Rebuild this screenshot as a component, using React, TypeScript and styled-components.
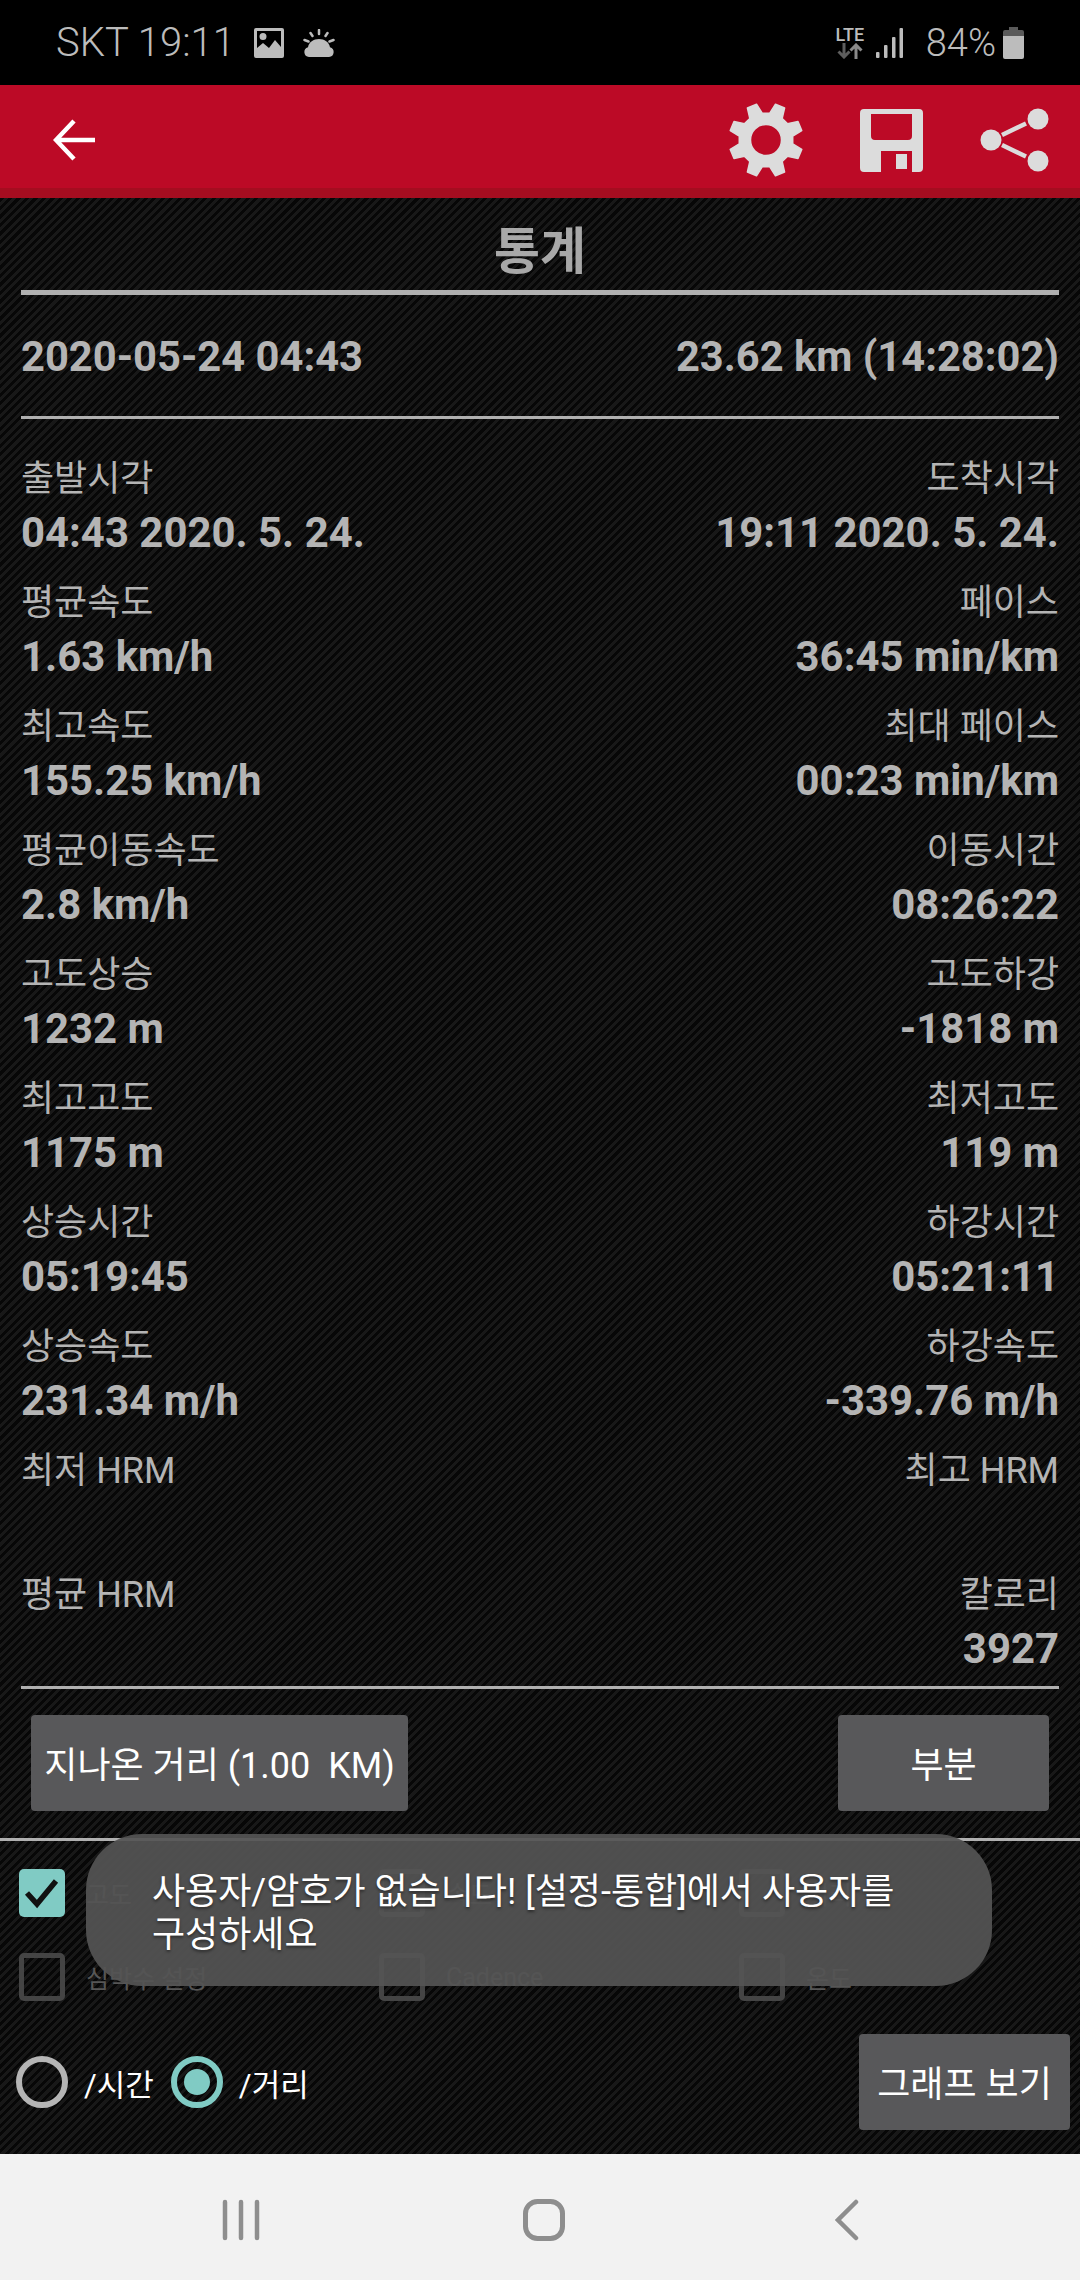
import React from "react";
import styled, { createGlobalStyle } from "styled-components";

const GlobalStyle = createGlobalStyle`
  html, body {
    margin: 0;
    padding: 0;
    background: #000;
  }
  * {
    box-sizing: border-box;
  }
`;

const FONT = `Roboto, "Noto Sans CJK KR", sans-serif`;

const Screen = styled.div`
  position: relative;
  display: flex;
  flex-direction: column;
  width: 1080px;
  height: 2280px;
  overflow: hidden;
  font-family: ${FONT};
  color: #b4b4b4;
`;

const StatusBar = styled.div`
  display: flex;
  flex-shrink: 0;
  align-items: center;
  height: 85px;
  padding: 0 56px 0 56px;
  background: #000;
  color: #bcbcbc;
`;

const StatusText = styled.span`
  font-size: 38px;
  line-height: 44px;
  font-weight: 300;
  white-space: pre;
`;

const Carrier = styled(StatusText)`
  font-size: 40px;
`;

const StatusLeft = styled.div`
  display: flex;
  align-items: center;
  gap: 19px;
  flex: 1;
`;

const StatusRight = styled.div`
  display: flex;
  align-items: center;
`;

const LteBox = styled.div`
  display: flex;
  flex-direction: column;
  align-items: center;
  width: 30px;
  margin-right: 11px;
  font-size: 18px;
  line-height: 17px;
  font-weight: 500;
`;

const Percent = styled(StatusText)`
  margin: 0 7px 0 23px;
`;

const TopBar = styled.div`
  display: flex;
  flex-shrink: 0;
  align-items: center;
  height: 113px;
  padding: 7px 31px 0 53px;
  background: #bc0a26;
  border-bottom: 10px solid #a50d20;
`;

const BackButton = styled.div`
  display: flex;
  flex: 1;
`;

const Actions = styled.div`
  display: flex;
  align-items: center;
  gap: 57px;
`;

const Main = styled.div`
  flex: 1;
  display: flex;
  flex-direction: column;
  background-color: #090909;
  background-image: repeating-linear-gradient(
    135deg,
    #070707 0,
    #070707 3px,
    #181818 3px,
    #181818 6px
  );
`;

const Summary = styled.div`
  padding: 0 21px 0 21px;
`;

const Title = styled.h1`
  margin: 0;
  height: 92px;
  font-size: 50px;
  line-height: 108px;
  font-weight: 700;
  text-align: center;
  color: #a8a8a8;
`;

const Rule = styled.div<{ $h: number }>`
  flex-shrink: 0;
  height: ${(p) => p.$h}px;
  background: #b0b0b0;
`;

const DateRow = styled.div`
  display: flex;
  justify-content: space-between;
  align-items: center;
  height: 121px;
  padding: 2px 0 0 0;
  font-size: 41.7px;
  font-weight: 700;
`;

const StatGrid = styled.div`
  display: flex;
  flex-direction: column;
  padding: 34px 0 0;
`;

const StatRow = styled.div`
  display: flex;
  justify-content: space-between;
  height: 124px;
  &:last-child {
    height: 117px;
  }
`;

const StatCell = styled.div<{ $right?: boolean }>`
  display: flex;
  flex-direction: column;
  text-align: ${(p) => (p.$right ? "right" : "left")};
`;

const StatLabel = styled.div`
  height: 54px;
  font-size: 36px;
  line-height: 52px;
`;

const StatValue = styled.div`
  height: 56px;
  font-size: 41.9px;
  line-height: 52px;
  font-weight: 700;
`;

const ButtonRow = styled.div`
  display: flex;
  justify-content: space-between;
  padding: 26px 31px 27px 31px;
`;

const GreyButton = styled.div<{ $w: number }>`
  display: flex;
  align-items: center;
  justify-content: center;
  width: ${(p) => p.$w}px;
  height: 96px;
  padding-bottom: 2px;
  border-radius: 4px;
  background: #58585a;
  color: #fff;
  font-size: 36px;
  font-weight: 400;
  white-space: pre;
`;

const Options = styled.div`
  display: grid;
  grid-template-columns: repeat(3, 360px);
  row-gap: 36px;
  padding: 28px 0 33px 19px;
`;

const Option = styled.div`
  display: flex;
  align-items: center;
  gap: 21px;
  height: 48px;
  color: #565656;
  font-size: 25px;
`;

const CheckBox = styled.div<{ $on?: boolean }>`
  display: flex;
  align-items: center;
  justify-content: center;
  width: 46px;
  height: 48px;
  border-radius: 5px;
  background: ${(p) => (p.$on ? "#80cbc4" : "transparent")};
  border: ${(p) => (p.$on ? "none" : "5px solid #444")};
`;

const BottomRow = styled.div`
  display: flex;
  justify-content: space-between;
  align-items: center;
  padding: 0 10px 24px 16px;
`;

const RadioGroup = styled.div`
  display: flex;
  align-items: center;
`;

const RadioLabel = styled.span`
  margin: 0 17px 0 16px;
  color: #fff;
  font-size: 31px;
`;

const Radio = styled.div<{ $on?: boolean }>`
  display: flex;
  align-items: center;
  justify-content: center;
  width: 52px;
  height: 52px;
  border-radius: 50%;
  border: 6px solid ${(p) => (p.$on ? "#80cbc4" : "#b5b5b5")};
`;

const RadioDot = styled.div`
  width: 26px;
  height: 26px;
  border-radius: 50%;
  background: #80cbc4;
`;

const Toast = styled.div`
  position: absolute;
  left: 86px;
  top: 1834px;
  width: 906px;
  height: 152px;
  padding: 37px 60px 0 66px;
  border-radius: 56px;
  background: rgba(84, 84, 84, 0.93);
  color: #fff;
  font-size: 36px;
  line-height: 43px;
  text-shadow: 0 2px 3px rgba(0, 0, 0, 0.45);
`;

const NavBar = styled.div`
  display: grid;
  flex-shrink: 0;
  grid-template-columns: repeat(3, 303px);
  height: 126px;
  padding: 0 0 0 89px;
  background: #f2f2f2;
`;

const NavSlot = styled.div`
  display: flex;
  align-items: center;
  justify-content: center;
  padding-top: 6px;
`;

// 8 tooth gear, computed instead of hand typing every point
function gearPath(cx: number, cy: number, outer: number, root: number, hole: number) {
  const pts: string[] = [];
  const teeth = 8;
  for (let i = 0; i < teeth; i++) {
    const a = (i * Math.PI * 2) / teeth - Math.PI / 2 + Math.PI / 8;
    const step = (Math.PI * 2) / teeth;
    const at = (r: number, t: number) =>
      `${(cx + r * Math.cos(t)).toFixed(2)} ${(cy + r * Math.sin(t)).toFixed(2)}`;
    pts.push(at(root, a - step * 0.32));
    pts.push(at(outer, a - step * 0.17));
    pts.push(at(outer, a + step * 0.17));
    pts.push(at(root, a + step * 0.32));
  }
  const h = `M${cx - hole} ${cy}a${hole} ${hole} 0 1 0 ${hole * 2} 0a${hole} ${hole} 0 1 0 ${-hole * 2} 0Z`;
  return `M${pts.join("L")}Z${h}`;
}

function PictureIcon() {
  return (
    <svg width="30" height="30" viewBox="0 0 30 30" fill="#bcbcbc">
      <path
        fillRule="evenodd"
        d="M2 0h26a2 2 0 0 1 2 2v26a2 2 0 0 1-2 2H2a2 2 0 0 1-2-2V2a2 2 0 0 1 2-2ZM3 3v17l6-5 6 5 6-8 6 7V3ZM9 5a3.500 3.500 0 1 0 0 7 3.500 3.500 0 0 0 0-7Z"
      />
    </svg>
  );
}

function WeatherIcon() {
  return (
    <svg width="32" height="28" viewBox="0 0 32 28" fill="#bcbcbc">
      <path d="M6 28a5 5 0 0 1-1-9.800C6 13 10.500 10 16 10s10 3 11 8.200A5 5 0 0 1 26 28Z" />
      <g stroke="#bcbcbc" strokeWidth="2.500" strokeLinecap="round">
        <path d="M16 1v4M7.500 4l2 3M24.500 4l-2 3M1.500 11l4 1.500M30.500 11l-4 1.500" />
      </g>
    </svg>
  );
}

function DataArrows() {
  return (
    <svg width="26" height="16" viewBox="0 0 26 16" fill="none" strokeWidth="3">
      <path d="M7 0v14M1.500 8.500 7 14l5.500-5.500" stroke="#5e5e5e" />
      <path d="M19 16V2M13.500 7.500 19 2l5.500 5.500" stroke="#8a8a8a" />
    </svg>
  );
}

function SignalIcon() {
  return (
    <svg width="27" height="30" viewBox="0 0 27 30" fill="#bcbcbc">
      <rect x="0" y="24" width="3.500" height="6" rx="1" />
      <rect x="8" y="17" width="3.500" height="13" rx="1" />
      <rect x="16" y="9" width="3.500" height="21" rx="1" />
      <rect x="23.500" y="0" width="3.500" height="30" rx="1" />
    </svg>
  );
}

function BatteryIcon() {
  return (
    <svg width="21" height="32" viewBox="0 0 21 32">
      <path d="M6 0h9v3h4a2 2 0 0 1 2 2v4H0V5a2 2 0 0 1 2-2h4Z" fill="#5a5a5a" />
      <path d="M0 9h21v21a2 2 0 0 1-2 2H2a2 2 0 0 1-2-2Z" fill="#bcbcbc" />
    </svg>
  );
}

function BackArrow() {
  return (
    <svg width="42" height="42" viewBox="0 0 42 42" fill="none" stroke="#fff" strokeWidth="4.500">
      <path d="M42 21H3M21 2 3 21l18 19" />
    </svg>
  );
}

function GearIcon() {
  return (
    <svg width="74" height="74" viewBox="0 0 74 74" fill="#dcdcdc">
      <path fillRule="evenodd" d={gearPath(37, 37, 37, 27, 15.500)} stroke="#dcdcdc" strokeWidth="1.500" strokeLinejoin="round" />
    </svg>
  );
}

function SaveIcon() {
  return (
    <svg width="63" height="63" viewBox="0 0 63 63" fill="#dcdcdc">
      <path
        fillRule="evenodd"
        d="M4 0h55a4 4 0 0 1 4 4v55a4 4 0 0 1-4 4h-7V42H21v21H4a4 4 0 0 1-4-4V4a4 4 0 0 1 4-4ZM11 5v22a4 4 0 0 0 4 4h33a4 4 0 0 0 4-4V5Z"
      />
      <rect x="36" y="45" width="11" height="15" />
    </svg>
  );
}

function ShareIcon() {
  return (
    <svg width="69" height="64" viewBox="0 0 69 64" fill="#dcdcdc">
      <circle cx="11" cy="32" r="10.500" />
      <circle cx="58" cy="11" r="10.500" />
      <circle cx="58" cy="53" r="10.500" />
      <path d="M22 27 46 15.500M22 37 46 48.500" stroke="#dcdcdc" strokeWidth="4.500" />
    </svg>
  );
}

function CheckMark() {
  return (
    <svg width="36" height="34" viewBox="0 0 36 34" fill="none" stroke="#111" strokeWidth="5.500">
      <path d="M3 17 13 28 32 5" />
    </svg>
  );
}

function NavRecent() {
  return (
    <svg width="38" height="42" viewBox="0 0 38 42" stroke="#8e8e8e" strokeWidth="4.500" strokeLinecap="round">
      <path d="M3 3v36M19 3v36M35 3v36" />
    </svg>
  );
}

function NavHome() {
  return (
    <svg width="42" height="42" viewBox="0 0 42 42" fill="none" stroke="#8e8e8e" strokeWidth="5">
      <rect x="2.500" y="2.500" width="37" height="37" rx="12" />
    </svg>
  );
}

function NavBack() {
  return (
    <svg width="24" height="42" viewBox="0 0 24 42" fill="none" stroke="#8e8e8e" strokeWidth="4.500" strokeLinecap="round">
      <path d="M21 3 3 21l18 18" />
    </svg>
  );
}

const stats: Array<[string, string, string, string]> = [
  ["출발시각", "04:43 2020. 5. 24.", "도착시각", "19:11 2020. 5. 24."],
  ["평균속도", "1.63 km/h", "페이스", "36:45 min/km"],
  ["최고속도", "155.25 km/h", "최대 페이스", "00:23 min/km"],
  ["평균이동속도", "2.8 km/h", "이동시간", "08:26:22"],
  ["고도상승", "1232 m", "고도하강", "-1818 m"],
  ["최고고도", "1175 m", "최저고도", "119 m"],
  ["상승시간", "05:19:45", "하강시간", "05:21:11"],
  ["상승속도", "231.34 m/h", "하강속도", "-339.76 m/h"],
  ["최저 HRM", "", "최고 HRM", ""],
  ["평균 HRM", "", "칼로리", "3927"],
];

const options = ["고도", "속도", "거리", "심박수 설정", "Cadence", "온도"];

export default function App() {
  return (
    <Screen>
      <GlobalStyle />
      <StatusBar>
        <StatusLeft>
          <Carrier>SKT 19:11</Carrier>
          <PictureIcon />
          <WeatherIcon />
        </StatusLeft>
        <StatusRight>
          <LteBox>
            LTE
            <DataArrows />
          </LteBox>
          <SignalIcon />
          <Percent>84%</Percent>
          <BatteryIcon />
        </StatusRight>
      </StatusBar>

      <TopBar>
        <BackButton>
          <BackArrow />
        </BackButton>
        <Actions>
          <GearIcon />
          <SaveIcon />
          <ShareIcon />
        </Actions>
      </TopBar>

      <Main>
        <Summary>
          <Title>통계</Title>
          <Rule $h={5} />
          <DateRow>
            <span>2020-05-24 04:43</span>
            <span>23.62 km (14:28:02)</span>
          </DateRow>
          <Rule $h={3} />
          <StatGrid>
            {stats.map((s) => (
              <StatRow key={s[0]}>
                <StatCell>
                  <StatLabel>{s[0]}</StatLabel>
                  <StatValue>{s[1]}</StatValue>
                </StatCell>
                <StatCell $right>
                  <StatLabel>{s[2]}</StatLabel>
                  <StatValue>{s[3]}</StatValue>
                </StatCell>
              </StatRow>
            ))}
          </StatGrid>
          <Rule $h={3} />
        </Summary>

        <ButtonRow>
          <GreyButton $w={377}>지나온 거리 (1.00  KM)</GreyButton>
          <GreyButton $w={211}>부분</GreyButton>
        </ButtonRow>
        <Rule $h={3} />

        <Options>
          {options.map((o, i) => (
            <Option key={o}>
              <CheckBox $on={i === 0}>{i === 0 && <CheckMark />}</CheckBox>
              {o}
            </Option>
          ))}
        </Options>

        <BottomRow>
          <RadioGroup>
            <Radio />
            <RadioLabel>/시간</RadioLabel>
            <Radio $on>
              <RadioDot />
            </Radio>
            <RadioLabel>/거리</RadioLabel>
          </RadioGroup>
          <GreyButton $w={211}>그래프 보기</GreyButton>
        </BottomRow>
      </Main>

      <NavBar>
        <NavSlot>
          <NavRecent />
        </NavSlot>
        <NavSlot>
          <NavHome />
        </NavSlot>
        <NavSlot>
          <NavBack />
        </NavSlot>
      </NavBar>

      <Toast>사용자/암호가 없습니다! [설정-통합]에서 사용자를 구성하세요</Toast>
    </Screen>
  );
}
